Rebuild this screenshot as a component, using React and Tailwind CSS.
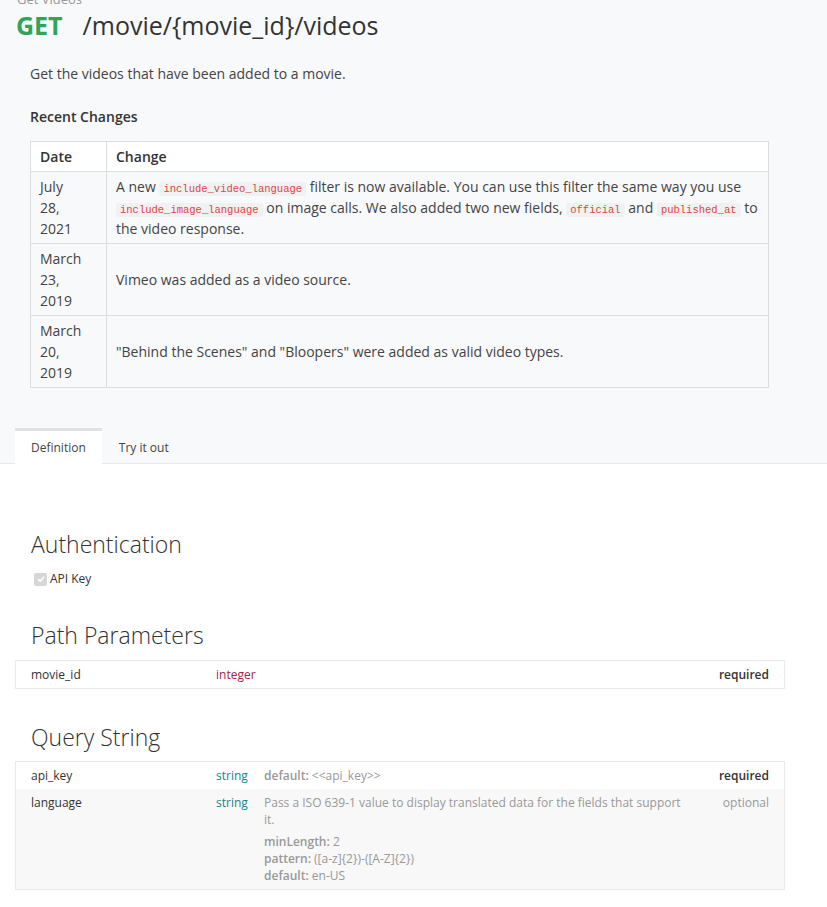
import React from "react";

const Code = ({ children }) => (
  <code className="rounded-[3px] bg-[#f0f1f3] px-[4px] py-[1px] font-['Liberation_Mono',monospace] text-[10.5px] leading-[12px] text-[#e0453a]">
    {children}
  </code>
);

export default function App() {
  return (
    <div className="min-h-[907px] bg-white font-['Open_Sans',sans-serif] text-[#333]">
      <div className="border-b border-[#e8e9eb] bg-[#f8f9fb]">
        <div className="-mt-[9px] pl-[17px] text-[13px] leading-[16px] text-[#999]">Get Videos</div>
        <div className="-mt-[2px] flex items-baseline pl-[16px] pt-[3px] text-[25px] leading-[34px]">
          <span className="font-bold text-[#2ea55b]">GET</span>
          <span className="ml-[20px] text-[#333]">/movie/{"{movie_id}"}/videos</span>
        </div>
        <div className="px-[30px] pt-[21px]">
          <p className="text-[14px] leading-[21px] text-[#444]">Get the videos that have been added to a movie.</p>
          <h4 className="mt-[22px] text-[14px] font-semibold leading-[21px] text-[#333]">Recent Changes</h4>
          <table className="mt-[14px] w-[739px] border-collapse text-[14px] leading-[21px] text-[#444]">
            <thead>
              <tr className="bg-white">
                <th className="w-[76px] border border-[#dcdde0] px-[9px] py-[4px] text-left font-semibold text-[#333]">Date</th>
                <th className="border border-[#dcdde0] px-[9px] py-[4px] text-left font-semibold text-[#333]">Change</th>
              </tr>
            </thead>
            <tbody>
              <tr>
                <td className="border border-[#dcdde0] px-[9px] py-[4px] align-middle">July<br />28,<br />2021</td>
                <td className="border border-[#dcdde0] px-[9px] py-[4px] align-middle">
                  A new <Code>include_video_language</Code> filter is now available. You can use this filter the same way you use{" "}
                  <Code>include_image_language</Code> on image calls. We also added two new fields, <Code>official</Code> and{" "}
                  <Code>published_at</Code> to the video response.
                </td>
              </tr>
              <tr>
                <td className="border border-[#dcdde0] px-[9px] py-[4px] align-middle">March<br />23,<br />2019</td>
                <td className="border border-[#dcdde0] px-[9px] py-[4px] align-middle">Vimeo was added as a video source.</td>
              </tr>
              <tr>
                <td className="border border-[#dcdde0] px-[9px] py-[4px] align-middle">March<br />20,<br />2019</td>
                <td className="border border-[#dcdde0] px-[9px] py-[4px] align-middle">"Behind the Scenes" and "Bloopers" were added as valid video types.</td>
              </tr>
            </tbody>
          </table>
        </div>
        <div className="mt-[40px] flex pl-[15px] text-[12px]">
          <div className="-mb-px border-t-[3px] border-[#e2e2e2] bg-white px-[16px] pb-[5px] pt-[6px] leading-[21px] text-[#444]">Definition</div>
          <div className="px-[17px] pb-[5px] pt-[9px] leading-[21px] text-[#444]">Try it out</div>
        </div>
      </div>

      <div className="w-[785px] pb-[16px] pl-[15px]">
        <h2 className="mt-[64px] pl-[16px] text-[23px] font-light leading-[32px] text-[#333]">Authentication</h2>
        <label className="mt-[10px] flex items-center pl-[19px] text-[12px] text-[#333]">
          <span className="mr-[3px] flex h-[13px] w-[13px] items-center justify-center rounded-[2px] bg-[#d6d6d6]">
            <svg viewBox="0 0 12 12" className="h-[10px] w-[10px]"><path d="M2.5 6.2 L5 8.6 L9.6 3.4" fill="none" stroke="#fff" strokeWidth="1.8" /></svg>
          </span>
          API Key
        </label>

        <h2 className="mt-[31px] pl-[16px] text-[23px] font-light leading-[32px] text-[#333]">Path Parameters</h2>
        <div className="mt-[9px] border border-[#eaeaea] text-[12px] leading-[18px]">
          <div className="flex items-start px-[15px] pb-[4px] pt-[5px]">
            <div className="w-[185px] text-[#333]">movie_id</div>
            <div className="text-[#a51d4a]">integer</div>
            <div className="ml-auto font-semibold text-[#333]">required</div>
          </div>
        </div>

        <h2 className="mt-[32px] pl-[16px] text-[23px] font-light leading-[32px] text-[#333]">Query String</h2>
        <div className="mt-[8px] border border-[#eaeaea] text-[12px] leading-[18px]">
          <div className="flex items-start bg-white px-[15px] pb-[4px] pt-[5px]">
            <div className="w-[185px] text-[#333]">api_key</div>
            <div className="w-[48px] text-[#15838e]">string</div>
            <div className="flex-1 text-[#999]"><span className="font-semibold">default:</span> &lt;&lt;api_key&gt;&gt;</div>
            <div className="ml-auto font-semibold text-[#333]">required</div>
          </div>
          <div className="flex items-start bg-[#f8f8f8] px-[15px] pb-[5px] pt-[5px]">
            <div className="w-[185px] text-[#333]">language</div>
            <div className="w-[48px] text-[#15838e]">string</div>
            <div className="w-[430px] text-[#999]">
              <p className="leading-[17px]">Pass a ISO 639-1 value to display translated data for the fields that support it.</p>
              <p className="mt-[5px] leading-[17px]"><span className="font-semibold">minLength:</span> 2</p>
              <p className="leading-[17px]"><span className="font-semibold">pattern:</span> ([a-z]{"{2}"})-([A-Z]{"{2}"})</p>
              <p className="leading-[17px]"><span className="font-semibold">default:</span> en-US</p>
            </div>
            <div className="ml-auto text-[#999]">optional</div>
          </div>
        </div>
      </div>
    </div>
  );
}
